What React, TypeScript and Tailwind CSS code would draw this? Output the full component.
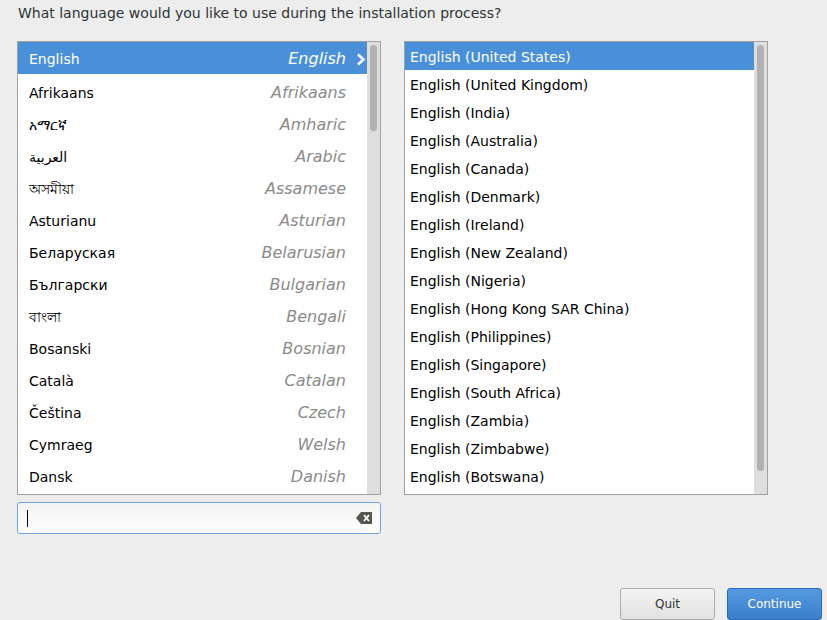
import React from 'react';

const languages: [string, string][] = [
  ['English', 'English'],
  ['Afrikaans', 'Afrikaans'],
  ['አማርኛ', 'Amharic'],
  ['العربية', 'Arabic'],
  ['অসমীয়া', 'Assamese'],
  ['Asturianu', 'Asturian'],
  ['Беларуская', 'Belarusian'],
  ['Български', 'Bulgarian'],
  ['বাংলা', 'Bengali'],
  ['Bosanski', 'Bosnian'],
  ['Català', 'Catalan'],
  ['Čeština', 'Czech'],
  ['Cymraeg', 'Welsh'],
  ['Dansk', 'Danish'],
];

const locales = [
  'United States',
  'United Kingdom',
  'India',
  'Australia',
  'Canada',
  'Denmark',
  'Ireland',
  'New Zealand',
  'Nigeria',
  'Hong Kong SAR China',
  'Philippines',
  'Singapore',
  'South Africa',
  'Zambia',
  'Zimbabwe',
  'Botswana',
];

function Scrollbar({ thumbTop, thumbHeight }: { thumbTop: number; thumbHeight: number }) {
  return (
    <div className="relative w-[13px] shrink-0 bg-[#dedede]">
      <div
        className="absolute left-[3px] w-[7px] rounded-full bg-[#b1b1b1]"
        style={{ top: thumbTop, height: thumbHeight }}
      />
    </div>
  );
}

export default function App() {
  return (
    <div
      className="relative w-[827px] h-[620px] overflow-hidden bg-[#ededed] text-[#2e3436]"
      style={{ fontFamily: '"DejaVu Sans", "Noto Sans", sans-serif' }}
    >
      <p className="absolute left-[18px] top-[3px] text-[14px] leading-[20px]">
        What language would you like to use during the installation process?
      </p>

      <div className="absolute left-[17px] top-[41px] flex gap-[23px]">
        {/* Language column */}
        <div className="flex flex-col gap-[7px]">
          <div className="flex w-[364px] h-[454px] border border-[#a1a1a1] bg-white">
            <div className="flex-1 flex flex-col">
              {languages.map(([native, english], i) => {
                const selected = i === 0;
                return (
                  <div
                    key={english}
                    className={`relative flex h-[32px] items-center justify-between pl-[11px] pr-[21px] ${
                      selected ? 'bg-[#4a90d9] pt-[2px] text-white' : 'pt-[6px] text-black'
                    }`}
                  >
                    <span className="text-[14px]">{native}</span>
                    <span
                      className={`text-[16px] italic ${selected ? 'text-white' : 'text-[#8b8b8b]'}`}
                    >
                      {english}
                    </span>
                    {selected && (
                      <svg
                        className="absolute right-[1px] top-[11px]"
                        width="10"
                        height="13"
                        viewBox="0 0 10 13"
                      >
                        <path d="M2 1.5 L7.5 6.5 L2 11.5" fill="none" stroke="white" strokeWidth="2.6" />
                      </svg>
                    )}
                  </div>
                );
              })}
            </div>
            <Scrollbar thumbTop={3} thumbHeight={86} />
          </div>

          <div className="flex h-[32px] w-[364px] items-center justify-between rounded-[3px] border border-[#6fa3de] bg-gradient-to-b from-[#f4f4f4] to-white pl-[9px] pr-[8px]">
            <div className="h-[17px] w-px bg-black" />
            <svg width="16" height="12" viewBox="0 0 16 12">
              <path d="M5 0 H16 V12 H5 L0 6 Z" fill="#555753" />
              <path d="M8 3 L13 9 M13 3 L8 9" stroke="white" strokeWidth="1.8" />
            </svg>
          </div>
        </div>

        {/* Locale column */}
        <div className="flex w-[364px] h-[454px] border border-[#a1a1a1] bg-white">
          <div className="flex-1 flex flex-col">
            {locales.map((loc, i) => (
              <div
                key={loc}
                className={`flex h-[28px] items-center pl-[5px] pt-[2px] text-[14px] ${
                  i === 0 ? 'bg-[#4a90d9] text-white' : 'text-black'
                }`}
              >
                English ({loc})
              </div>
            ))}
          </div>
          <Scrollbar thumbTop={3} thumbHeight={426} />
        </div>
      </div>

      <div className="absolute left-[620px] top-[588px] flex gap-[12px]">
        <button className="h-[32px] w-[95px] rounded-[3px] border border-[#adadad] bg-gradient-to-b from-[#f4f4f4] to-[#e1e1e1] text-[12px] text-[#2e3436]">
          Quit
        </button>
        <button className="h-[32px] w-[95px] rounded-[3px] border border-[#2a6cb6] bg-gradient-to-b from-[#5599e0] to-[#3a7fcb] text-[12px] text-white">
          Continue
        </button>
      </div>
    </div>
  );
}
